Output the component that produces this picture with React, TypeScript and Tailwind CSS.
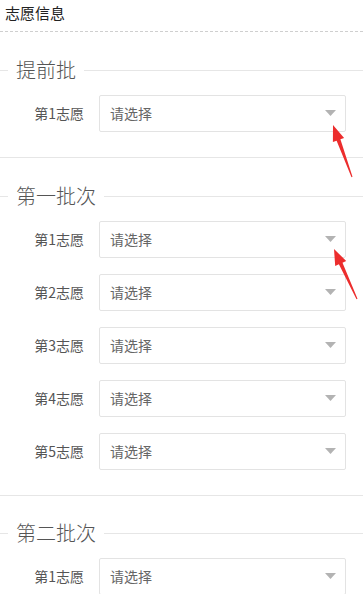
import React from "react";

const font = { fontFamily: '"Microsoft YaHei", "Noto Sans CJK SC", "Noto Sans", sans-serif' };

function Row({ label }: { label: string }) {
  return (
    <div className="flex items-center h-[37px]">
      <div className="w-[84px] text-right text-[14px] text-[#555]">{label}</div>
      <div className="ml-[15px] w-[247px] h-[37px] border border-[#e3e3e3] rounded-[2px] bg-white flex items-center justify-between pl-[10px] pr-[9px]">
        <span className="text-[14px] text-[#666]">请选择</span>
        <svg width="11" height="6" viewBox="0 0 11 6" className="mt-[-2px]">
          <polygon points="0,0 11,0 5.5,6" fill="#b3b3b3" />
        </svg>
      </div>
    </div>
  );
}

function Section({ title, count, first }: { title: string; count: number; first?: boolean }) {
  const rows = Array.from({ length: count }, (_, i) => `第${i + 1}志愿`);
  return (
    <div className={`${first ? "mt-[24px]" : "mt-[23px]"} border-b border-[#e6e6e6] pb-[25px]`}>
      <div className="flex items-center h-[28px]">
        <div className="w-[8px] h-px bg-[#e6e6e6]" />
        <div className="px-[8px] text-[20px] leading-[28px] font-light text-[#555]">{title}</div>
        <div className="flex-1 h-px bg-[#e6e6e6]" />
      </div>
      <div className="mt-[11px] flex flex-col gap-[16px]">
        {rows.map((r) => (
          <Row key={r} label={r} />
        ))}
      </div>
    </div>
  );
}

export default function App() {
  return (
    <div className="relative w-[363px] h-[594px] overflow-hidden bg-white" style={font}>
      <div className="h-[32px] pb-[4px] pl-[5px] flex items-center text-[15px] text-[#222] border-b border-dashed border-[#cfcfcf]">
        志愿信息
      </div>
      <Section title="提前批" count={1} first />
      <Section title="第一批次" count={5} first />
      <Section title="第二批次" count={1} />
      <svg className="absolute left-0 top-0 pointer-events-none" width="363" height="594" viewBox="0 0 363 594">
        <polygon
          points="333,125 344.1,137.9 340.4,139.3 352.5,176.8 351.5,177.2 336.6,140.7 332.9,142.1"
          fill="#ec2d2d"
        />
        <polygon
          points="334,249 346.2,261 342.5,262.7 357.5,298.8 356.5,299.2 338.9,264.3 335.2,266"
          fill="#ec2d2d"
        />
      </svg>
    </div>
  );
}
